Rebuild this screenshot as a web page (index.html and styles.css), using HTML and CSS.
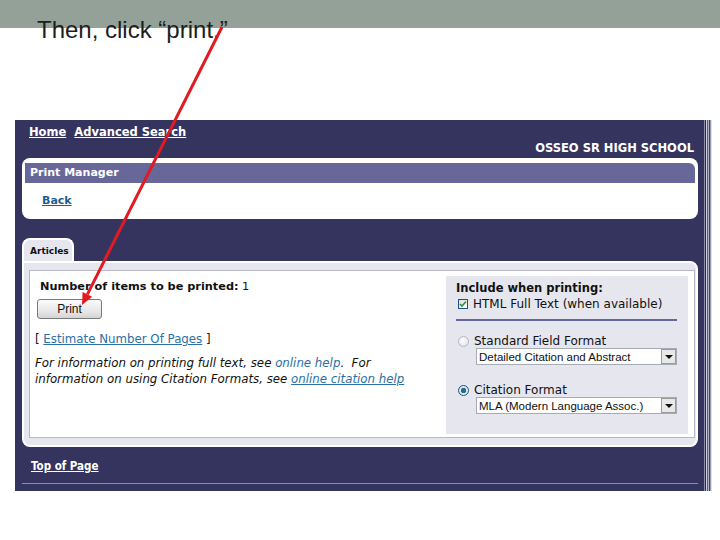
FILE: index.html
```html
<!DOCTYPE html>
<html lang="en">
<head>
    <meta charset="UTF-8">
    <title>Then, click print</title>
    <link rel="stylesheet" href="styles.css">
</head>
<body>
    <div class="slide">
        <div class="slide-head">
            <h1 class="slide-title">Then, click “print.”</h1>
        </div>

        <div class="shot">
            <div class="page">
                <div class="nav">
                    <a href="#">Home</a>
                    <a href="#">Advanced Search</a>
                </div>
                <div class="school">OSSEO SR HIGH SCHOOL</div>

                <div class="pm-box">
                    <div class="pm-header">Print Manager</div>
                    <div class="pm-back"><a href="#">Back</a></div>
                </div>

                <div class="tabs">
                    <div class="tab">Articles</div>
                </div>
                <div class="tab-body">
                    <div class="tab-inner">
                        <div class="left-col">
                            <div class="count"><b>Number of items to be printed:</b> 1</div>
                            <button class="print-btn">Print</button>
                            <div class="estimate">[ <a href="#">Estimate Number Of Pages</a> ]</div>
                            <div class="help">
                                <span class="help-line">For information on printing full text, see <a href="#" class="plain">online help</a>.&nbsp; For</span>
                                <span class="help-line">information on using Citation Formats, see <a href="#">online citation help</a></span>
                            </div>
                        </div>

                        <div class="options">
                            <div class="opt-title">Include when printing:</div>
                            <div class="opt-row">
                                <span class="checkbox">
                                    <svg width="8" height="8" viewBox="0 0 8 8"><path d="M1 4 L3 6 L7 1.5" fill="none" stroke="#3c8a3c" stroke-width="1.6"/></svg>
                                </span>
                                HTML Full Text (when available)
                            </div>
                            <div class="opt-rule"></div>
                            <div class="opt-row">
                                <span class="radio"></span>
                                Standard Field Format
                            </div>
                            <div class="select">
                                <span class="select-text">Detailed Citation and Abstract</span>
                                <span class="select-arrow"></span>
                            </div>
                            <div class="opt-row opt-gap">
                                <span class="radio checked"></span>
                                Citation Format
                            </div>
                            <div class="select">
                                <span class="select-text">MLA (Modern Language Assoc.)</span>
                                <span class="select-arrow"></span>
                            </div>
                        </div>
                    </div>
                </div>

                <div class="foot"><a href="#">Top of Page</a></div>
                <div class="foot-rule"></div>
            </div>
            <div class="edge"></div>
        </div>
    </div>

    <!-- red pointer drawn on top of the screenshot -->
    <svg class="pointer" width="720" height="540" viewBox="0 0 720 540">
        <line x1="222" y1="27" x2="87.4" y2="294.3" stroke="#e01b22" stroke-width="3"/>
        <polygon points="82,305 92.2,296.8 82.6,291.9" fill="#e01b22"/>
    </svg>
</body>
</html>
```

FILE: styles.css
```css
* {
    margin: 0;
    padding: 0;
    box-sizing: border-box;
}

body {
    width: 720px;
    height: 540px;
    background: #fff;
    font-family: "DejaVu Sans", Verdana, sans-serif;
    overflow: hidden;
}

.slide {
    position: relative;
}

.slide-head {
    height: 120px;
    background: linear-gradient(#93a198 0 28px, #fff 28px);
    padding: 16px 0 0 37px;
}

.slide-title {
    font-family: "Liberation Sans", Arial, sans-serif;
    font-size: 24px;
    font-weight: normal;
    line-height: 28px;
    color: #1e1e1e;
}

/* screenshot of the database page */
.shot {
    display: flex;
    margin-left: 15px;
    height: 371px;
}

.page {
    width: 689px;
    height: 371px;
    background: #34345f;
    padding: 5px 6px 0 7px;
    font-size: 11px;
}

.edge {
    width: 8px;
    background: linear-gradient(to right, #8d8dab 0 1px, #2c2c50 1px 2px, #cfcfdc 2px 3px, #5a5a7e 3px 4px, #b4b4c8 4px 5px, #3c3c64 5px 6px, #9c9cb4 6px 7px, #e0e0e8 7px 8px);
}

.nav {
    padding-left: 7px;
    line-height: 14px;
    font-size: 11.5px;
    font-weight: bold;
}

.nav a,
.foot a {
    color: #fff;
    text-decoration: underline;
    margin-right: 4px;
}

.school {
    margin-top: 2px;
    text-align: right;
    padding-right: 4px;
    line-height: 14px;
    font-size: 11.5px;
    font-weight: bold;
    color: #fff;
}

.pm-box {
    margin-top: 3px;
    height: 61px;
    background: #fff;
    border-radius: 8px;
    padding: 5px 3px 0 3px;
}

.pm-header {
    height: 20px;
    line-height: 20px;
    background: #67679a;
    color: #fff;
    font-weight: bold;
    padding-left: 5px;
    border-radius: 0 6px 0 0;
}

.pm-back {
    margin-top: 11px;
    padding-left: 17px;
    line-height: 14px;
    font-weight: bold;
}

.pm-back a {
    color: #1b5e91;
}

.tabs {
    margin-top: 19px;
    display: flex;
}

.tab {
    width: 52px;
    height: 23px;
    background: #e6e6ee;
    border: 2px solid #fff;
    border-bottom: none;
    border-radius: 8px 8px 0 0;
    font-size: 9px;
    font-weight: bold;
    color: #111;
    padding: 6px 0 0 6px;
}

.tab-body {
    height: 186px;
    background: #e6e6ee;
    border: 2px solid #fff;
    border-radius: 0 8px 8px 8px;
    padding: 7px 1px 7px 5px;
}

.tab-inner {
    display: flex;
    height: 168px;
    background: #fff;
    border: 1px solid #b8b8c8;
    padding: 5px 6px 3px 0;
}

.left-col {
    flex: 1;
    padding: 4px 0 0 5px;
    color: #111;
}

.count {
    padding-left: 5px;
    line-height: 14px;
    font-size: 11.3px;
}

.print-btn {
    display: block;
    margin: 5px 0 0 2px;
    width: 65px;
    height: 20px;
    border: 1px solid #7a7a7a;
    border-radius: 3px;
    background: linear-gradient(#fbfbfb, #e8e8e8 60%, #d4d4d4);
    font-family: "Liberation Sans", Arial, sans-serif;
    font-size: 12px;
    color: #111;
}

.estimate {
    margin-top: 13px;
    line-height: 14px;
    font-size: 11.8px;
}

.left-col a {
    color: #2a6fa5;
}

.help {
    margin-top: 9px;
    font-size: 11.8px;
    font-style: italic;
    line-height: 16px;
}

.help-line {
    display: block;
    white-space: nowrap;
}

.help a.plain {
    text-decoration: none;
}

.options {
    width: 242px;
    background: #e6e6ee;
    padding: 5px 0 0 10px;
    color: #111;
}

.opt-title {
    font-weight: bold;
    font-size: 11.5px;
    line-height: 14px;
}

.opt-row {
    display: flex;
    align-items: center;
    gap: 5px;
    padding-left: 2px;
    margin-top: 2px;
    line-height: 14px;
    font-size: 12px;
}

.opt-gap {
    margin-top: 18px;
}

.checkbox {
    width: 10px;
    height: 10px;
    border: 1px solid #1c5180;
    background: linear-gradient(135deg, #dcdcd6, #fff);
    display: flex;
    align-items: center;
    justify-content: center;
}

.radio {
    width: 11px;
    height: 11px;
    border-radius: 50%;
    border: 1px solid #b8b8c4;
    background: radial-gradient(circle at 40% 40%, #fff, #dcdce0);
}

.radio.checked {
    border-color: #1c5180;
    background: radial-gradient(circle, #2a6f7c 0 2.5px, #dfe8ec 3px);
}

.opt-rule {
    margin: 8px 11px 13px 0;
    height: 2px;
    background: #67679a;
}

.select {
    display: flex;
    align-items: center;
    justify-content: space-between;
    margin: 0 11px 0 20px;
    height: 17px;
    background: #fff;
    border: 1px solid #a5acb5;
    padding-left: 2px;
    font-family: "Liberation Sans", Arial, sans-serif;
    font-size: 11.5px;
    color: #111;
}

.select-arrow {
    width: 15px;
    height: 15px;
    background: #e8e8e8;
    border: 1px solid #9a9a9a;
    position: relative;
}

.select-arrow::after {
    content: "";
    position: absolute;
    left: 3px;
    top: 5px;
    border-left: 4px solid transparent;
    border-right: 4px solid transparent;
    border-top: 4px solid #111;
}

.foot {
    margin-top: 12px;
    padding-left: 9px;
    line-height: 14px;
    font-size: 11.5px;
    font-family: "DejaVu Sans Condensed", "DejaVu Sans", sans-serif;
    font-weight: bold;
}

.foot-rule {
    margin: 10px 0 0 0;
    height: 1px;
    background: #8a8ab0;
}

.pointer {
    position: absolute;
    left: 0;
    top: 0;
    pointer-events: none;
}
```
